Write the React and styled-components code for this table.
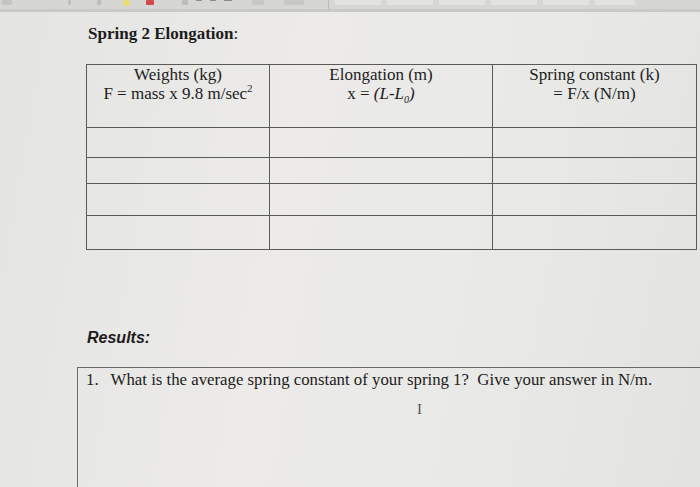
import React from "react";
import styled, { createGlobalStyle } from "styled-components";

const Global = createGlobalStyle`
  html, body { margin: 0; padding: 0; overflow: hidden; }
  body {
    width: 700px;
    height: 487px;
    background: linear-gradient(100deg, #e4e4e2 0%, #ecebe9 40%, #e9e9e7 70%, #e3e3e1 100%);
    font-family: "Liberation Serif", "Times New Roman", serif;
    color: #1c1c1c;
  }
`;

const Page = styled.div`
  width: 700px;
  height: 487px;
  display: flex;
  flex-direction: column;
  overflow: hidden;
`;

const Toolbar = styled.div`
  height: 9px;
  flex-shrink: 0;
  background: #d6d6d4;
  border-bottom: 3px solid #c9c9c7;
  display: flex;
  align-items: flex-start;
  gap: 6px;
  padding-left: 2px;
  overflow: hidden;
`;

const Tool = styled.span`
  display: block;
  width: ${(p) => p.w || 8}px;
  height: ${(p) => p.h || 5}px;
  margin-left: ${(p) => p.ml || 0}px;
  background: ${(p) => p.c || "#bdbdbb"};
  border-radius: ${(p) => (p.round ? "50%" : "1px")};
`;

const Body = styled.div`
  padding: 12px 0 0 86px;
  display: flex;
  flex-direction: column;
`;

const Title = styled.h2`
  margin: 0 0 0 2px;
  font-size: 17px;
  font-weight: bold;
  line-height: 20px;
  span { font-weight: normal; }
`;

const Table = styled.div`
  margin-top: 20px;
  width: 610px;
  display: grid;
  grid-template-columns: 183px 223px 204px;
  border-top: 1.5px solid #5a5a5a;
  border-left: 1.5px solid #5a5a5a;
`;

const Cell = styled.div`
  height: ${(p) => p.h}px;
  box-sizing: border-box;
  border-right: 1.5px solid #5a5a5a;
  border-bottom: 1.5px solid #5a5a5a;
  text-align: center;
  font-size: 17px;
  line-height: 19px;
  padding-top: 0;
  sup { font-size: 11px; line-height: 0; }
  i sub { font-size: 10px; line-height: 0; }
`;

const Results = styled.div`
  margin-top: 78px;
  margin-left: 1px;
  font-family: "Liberation Sans", Arial, sans-serif;
  font-weight: bold;
  font-style: italic;
  font-size: 16px;
  line-height: 20px;
`;

const QuestionBox = styled.div`
  margin-top: 19px;
  margin-left: -9px;
  width: 660px;
  height: 140px;
  border-top: 1.5px solid #6a6a6a;
  border-left: 1.5px solid #6a6a6a;
  padding: 2px 0 0 8px;
  font-size: 16.8px;
  line-height: 20px;
`;

const Question = styled.div`
  display: flex;
  gap: 12px;
`;

const Cursor = styled.div`
  margin: 11px 0 0 331px;
  font-family: "Liberation Serif", serif;
  font-size: 15px;
  color: #555;
  line-height: 16px;
`;

const headers = [
  [<>Weights (kg)</>, <>F = mass x 9.8 m/sec<sup>2</sup></>],
  [<>Elongation (m)</>, <>x = <i>(L-L<sub>0</sub>)</i></>],
  [<>Spring constant (k)</>, <>= F/x (N/m)</>],
];

const rowHeights = [30, 26, 32, 34];

export default function App() {
  return (
    <Page>
      <Global />
      <Toolbar>
        <Tool w={10} c="#c4c4c2" />
        <Tool w={3} ml={50} />
        <Tool w={4} ml={20} />
        <Tool w={7} ml={16} c="#e6e06a" round h={6} />
        <Tool w={8} ml={10} c="#d44a4a" />
        <Tool w={6} ml={22} c="#bcbcba" />
        <Tool w={6} ml={2} h={1} c="#8a8a8a" />
        <Tool w={6} ml={2} h={1} c="#8a8a8a" />
        <Tool w={8} ml={2} h={1} c="#8a8a8a" />
        <Tool w={12} ml={14} c="#c8c8c6" />
        <Tool w={20} ml={14} c="#c8c8c6" />
        <Tool w={1} ml={18} h={9} c="#bbbbb9" />
        <Tool w={46} c="#e2e2e0" h={5} />
        <Tool w={46} c="#e2e2e0" h={5} />
        <Tool w={46} c="#e2e2e0" h={5} />
        <Tool w={46} c="#e2e2e0" h={5} />
        <Tool w={46} c="#e2e2e0" h={5} />
        <Tool w={40} c="#e2e2e0" h={5} />
      </Toolbar>
      <Body>
        <Title>
          Spring 2 Elongation<span>:</span>
        </Title>
        <Table>
          {headers.map((h, i) => (
            <Cell key={i} h={63}>
              <div>{h[0]}</div>
              <div>{h[1]}</div>
            </Cell>
          ))}
          {rowHeights.map((h, r) =>
            [0, 1, 2].map((c) => <Cell key={`${r}-${c}`} h={h} />)
          )}
        </Table>
        <Results>Results:</Results>
        <QuestionBox>
          <Question>
            <span>1.</span>
            <span>What is the average spring constant of your spring 1?&nbsp; Give your answer in N/m.</span>
          </Question>
          <Cursor>I</Cursor>
        </QuestionBox>
      </Body>
    </Page>
  );
}
